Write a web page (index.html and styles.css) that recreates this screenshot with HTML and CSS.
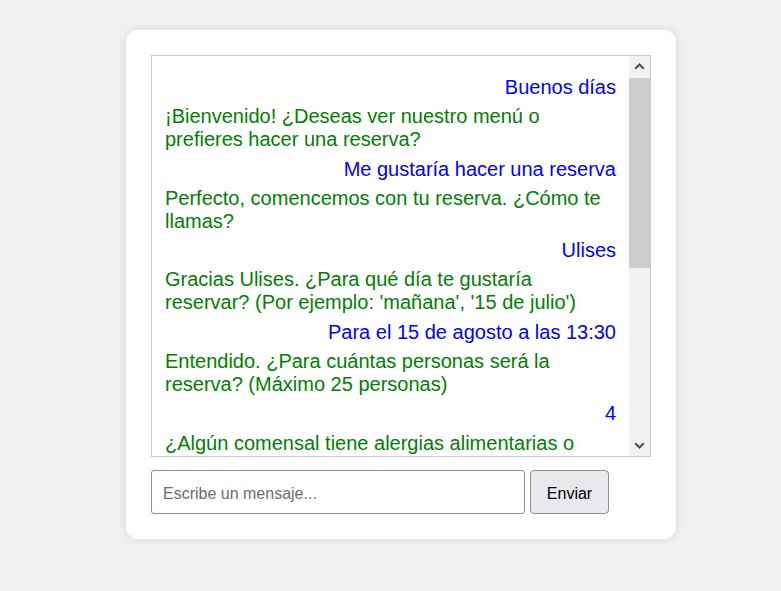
FILE: index.html
```html
<!DOCTYPE html>
<html lang="es">
<head>
<meta charset="utf-8">
<title>Chat de reservas</title>
<link rel="stylesheet" href="styles.css">
</head>
<body>
<div class="card">
  <div class="chat">
    <div class="log">
      <div class="msg user">Buenos días</div>
      <div class="msg bot">¡Bienvenido! ¿Deseas ver nuestro menú o prefieres hacer una reserva?</div>
      <div class="msg user">Me gustaría hacer una reserva</div>
      <div class="msg bot">Perfecto, comencemos con tu reserva. ¿Cómo te llamas?</div>
      <div class="msg user">Ulises</div>
      <div class="msg bot">Gracias Ulises. ¿Para qué día te gustaría reservar? (Por ejemplo: 'mañana', '15 de julio')</div>
      <div class="msg user">Para el 15 de agosto a las 13:30</div>
      <div class="msg bot">Entendido. ¿Para cuántas personas será la reserva? (Máximo 25 personas)</div>
      <div class="msg user">4</div>
      <div class="msg bot">¿Algún comensal tiene alergias alimentarias o intolerancias? (Escribe 'no' si no hay ninguna)</div>
      <div class="msg user">No</div>
      <div class="msg bot">¿Deseas añadir algún comentario o petición especial para tu reserva?</div>
    </div>
    <div class="scrollbar" aria-hidden="true">
      <div class="sb-btn">
        <svg width="11" height="7" viewBox="0 0 11 7"><path d="M1.2 5.8 L5.5 1.5 L9.8 5.8" fill="none" stroke="#505050" stroke-width="2"/></svg>
      </div>
      <div class="sb-track"><div class="sb-thumb"></div></div>
      <div class="sb-btn">
        <svg width="11" height="7" viewBox="0 0 11 7"><path d="M1.2 1.2 L5.5 5.5 L9.8 1.2" fill="none" stroke="#505050" stroke-width="2"/></svg>
      </div>
    </div>
  </div>
  <div class="composer">
    <input class="field" type="text" placeholder="Escribe un mensaje...">
    <button class="send" type="button">Enviar</button>
  </div>
</div>
</body>
</html>
```
FILE: styles.css
```css
html, body {
  margin: 0;
  padding: 0;
}
body {
  background: #f0f0f0;
  font-family: "Liberation Sans", Arial, sans-serif;
  padding: 30px 0 0 126px;
  height: 591px;
  box-sizing: border-box;
}
.card {
  width: 550px;
  box-sizing: border-box;
  background: #fff;
  border-radius: 12px;
  padding: 25px;
  box-shadow: 0 0 10px rgba(0, 0, 0, 0.1);
}
.chat {
  height: 402px;
  box-sizing: border-box;
  border: 1px solid #ccc;
  display: flex;
}
.log {
  flex: 1;
  min-width: 0;
  overflow: hidden;
  padding: 20px 13px 0 13px;
  font-size: 20px;
  line-height: 23px;
}
.scrollbar {
  width: 21px;
  display: flex;
  flex-direction: column;
  background: #f1f1f1;
}
.sb-btn {
  height: 21px;
  display: flex;
  align-items: center;
  justify-content: center;
  flex: none;
}
.sb-track {
  flex: 1;
  padding-top: 1px;
}
.sb-thumb {
  height: 190px;
  background: #cdcdcd;
}
.msg {
  margin-bottom: 6.3px;
}
.user {
  color: #0000ff;
  text-align: right;
}
.bot {
  color: #008000;
  text-align: left;
}
.composer {
  display: flex;
  gap: 5px;
  margin-top: 13px;
}
.field {
  width: 374px;
  height: 44px;
  box-sizing: border-box;
  border: 1px solid #8f8f9d;
  border-radius: 3px;
  padding: 3px 11px 0 11px;
  font-family: "Liberation Sans", Arial, sans-serif;
  font-size: 16px;
  color: #000;
  background: #fff;
  outline: none;
}
.field::placeholder {
  color: #6d6d6d;
}
.send {
  width: 79px;
  height: 44px;
  box-sizing: border-box;
  border: 1px solid #8f8f9d;
  border-radius: 4px;
  background: #e9e9ed;
  font-family: "Liberation Sans", Arial, sans-serif;
  font-size: 16px;
  color: #000;
  padding: 4px 0 0 0;
}
```
